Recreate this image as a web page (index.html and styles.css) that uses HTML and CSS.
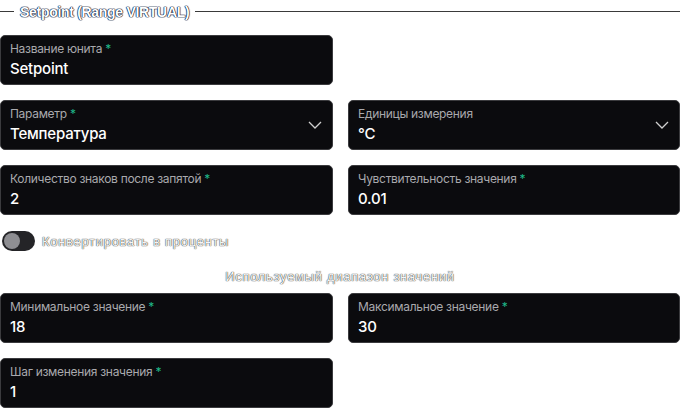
FILE: index.html
```html
<!DOCTYPE html>
<html>
<head>
<meta charset="utf-8">
<link rel="stylesheet" href="styles.css">
</head>
<body>
<div class="group">
  <div class="legend"><span class="line short"></span><span class="legend-text">Setpoint (Range VIRTUAL)</span><span class="line long"></span></div>
  <div class="grid">
    <div class="field"><div class="label">Название юнита <span class="req">*</span></div><div class="value">Setpoint</div></div>
    <div></div>
    <div class="field select"><div class="label">Параметр <span class="req">*</span></div><div class="value">Температура</div>
      <svg class="chev" width="14" height="8" viewBox="0 0 14 8"><path d="M1 1l6 6 6-6" fill="none" stroke="#cfcfcf" stroke-width="1.3"/></svg></div>
    <div class="field select"><div class="label">Единицы измерения</div><div class="value">°C</div>
      <svg class="chev" width="14" height="8" viewBox="0 0 14 8"><path d="M1 1l6 6 6-6" fill="none" stroke="#cfcfcf" stroke-width="1.3"/></svg></div>
    <div class="field"><div class="label">Количество знаков после запятой <span class="req">*</span></div><div class="value">2</div></div>
    <div class="field"><div class="label">Чувствительность значения <span class="req">*</span></div><div class="value">0.01</div></div>
  </div>
  <div class="toggle-row"><span class="toggle"><span class="knob"></span></span><span class="ghost">Конвертировать в проценты</span></div>
  <div class="subtitle"><span class="ghost">Используемый диапазон значений</span></div>
  <div class="grid">
    <div class="field"><div class="label">Минимальное значение <span class="req">*</span></div><div class="value">18</div></div>
    <div class="field"><div class="label">Максимальное значение <span class="req">*</span></div><div class="value">30</div></div>
    <div class="field"><div class="label">Шаг изменения значения <span class="req">*</span></div><div class="value">1</div></div>
  </div>
</div>
</body>
</html>
```
FILE: styles.css
```css
* { box-sizing: border-box; }
body { margin: 0; background: #fff; font-family: Inter, "Noto Sans", sans-serif; width: 683px; height: 409px; overflow: hidden; }
.group { padding: 0 3px 0 0; }
.legend { display: flex; align-items: center; height: 23px; gap: 6px; }
.line { height: 1px; background: #3a3a3a; display: block; }
.line.short { width: 14px; }
.line.long { flex: 1; }
.legend-text { font-family: "Liberation Sans", Arial, sans-serif; font-weight: bold; font-size: 14px; color: #fff; letter-spacing: -0.3px; text-shadow: 0 0 1px #06163a, 0 0 1px #06163a, 0 0 1px #06163a, 0 0 1px #06163a; }
.grid { display: grid; grid-template-columns: 333px 332px; column-gap: 15px; row-gap: 15px; padding-top: 12px; }
.field { position: relative; height: 50px; background: #0b0b0e; border: 1px solid #3b3b3e; border-radius: 5px; padding: 5px 9px 0; }
.label { font-size: 12px; color: #a9a9ad; letter-spacing: -0.3px; line-height: 15px; }
.req { color: #1fb889; }
.value { font-size: 15px; color: #fff; margin-top: 4px; line-height: 18px; letter-spacing: -0.2px; font-weight: 500; }
.chev { position: absolute; right: 10px; top: 20px; }
.toggle-row { display: flex; align-items: center; gap: 7px; padding: 16px 0 0 2px; height: 36px; }
.toggle { width: 33px; height: 20px; border-radius: 10px; background: #242427; display: flex; align-items: center; padding-left: 2px; }
.knob { width: 16px; height: 16px; border-radius: 50%; background: #8e8e92; }
.ghost { font-family: "Liberation Sans", Arial, sans-serif; font-size: 13px; color: #f6f6f6; letter-spacing: 0.7px; text-shadow: 0 0 1px #333, 0 0 1px #333; }
.subtitle { text-align: center; padding-top: 14px; height: 42px; }
.subtitle + .grid { padding-top: 0; }
```
